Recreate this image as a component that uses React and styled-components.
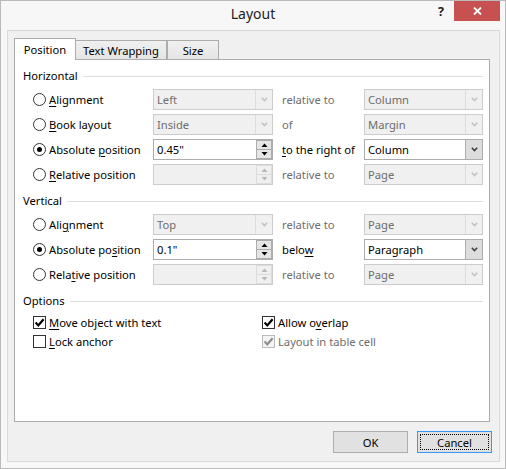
import React from 'react';
import styled, { createGlobalStyle } from 'styled-components';

const GlobalStyle = createGlobalStyle`
  html, body {
    margin: 0;
    padding: 0;
    background: #ffffff;
  }
  body {
    font-family: "Segoe UI", "Noto Sans", sans-serif;
    font-size: 11.2px;
    color: #000;
  }
  * {
    box-sizing: border-box;
  }
`;

const Window = styled.div`
  width: 506px;
  height: 469px;
  border: 1px solid #bababa;
  background: #f7f7f7;
  display: flex;
  flex-direction: column;
`;

const TitleBar = styled.div`
  height: 29px;
  flex: none;
  display: grid;
  grid-template-columns: 1fr auto 1fr;
  align-items: start;
`;

const Title = styled.div`
  grid-column: 2;
  font-size: 14px;
  line-height: 26px;
  color: #1e1e1e;
`;

const Controls = styled.div`
  grid-column: 3;
  justify-self: end;
  display: flex;
  margin-right: 5px;
`;

const HelpButton = styled.div`
  width: 26px;
  height: 20px;
  text-align: center;
  font-size: 12.5px;
  font-weight: bold;
  line-height: 22px;
  color: #222;
`;

const CloseButton = styled.div`
  width: 46px;
  height: 20px;
  background: #c75050;
  display: flex;
  align-items: center;
  justify-content: center;
`;

const Client = styled.div`
  flex: 1;
  margin: 0 5px 6px 6px;
  border: 1px solid #d9d9d9;
  background: #f0f0f0;
  padding: 7px 9px 8px 6px;
  display: flex;
  flex-direction: column;
`;

const TabRow = styled.div`
  display: flex;
  align-items: flex-end;
  height: 21px;
  flex: none;
`;

const Tab = styled.div`
  width: ${(p) => p.$w}px;
  margin-left: ${(p) => p.$ml || 0}px;
  height: ${(p) => (p.$active ? 22 : 19)}px;
  margin-bottom: ${(p) => (p.$active ? -1 : 0)}px;
  position: relative;
  z-index: ${(p) => (p.$active ? 1 : 0)};
  border: 1px solid #acacac;
  border-bottom: none;
  background: ${(p) => (p.$active ? '#ffffff' : 'linear-gradient(#f0f0f0, #e5e5e5)')};
  display: flex;
  align-items: center;
  justify-content: center;
  padding-bottom: ${(p) => (p.$active ? 1 : 0)}px;
`;

const Panel = styled.div`
  height: 363px;
  flex: none;
  background: #ffffff;
  border: 1px solid #acacac;
  padding: 8px 6px 0 8px;
`;

const Section = styled.div`
  margin-top: ${(p) => (p.$first ? 0 : 8)}px;
`;

const SectionHeader = styled.div`
  height: 16px;
  line-height: 16px;
  display: flex;
  align-items: center;
  gap: 5px;
  margin-bottom: 5px;

  &::after {
    content: '';
    flex: 1;
    height: 1px;
    background: #dcdcdc;
  }
`;

const Rows = styled.div`
  display: flex;
  flex-direction: column;
  gap: ${(p) => p.$gap}px;
  margin-left: 10px;
`;

const Row = styled.div`
  display: grid;
  grid-template-columns: 120px 120px 91px 1fr;
  align-items: center;
  height: 21px;
`;

const Choice = styled.div`
  display: flex;
  align-items: center;
  gap: 3px;
  white-space: nowrap;
  color: ${(p) => (p.$disabled ? '#6d6d6d' : '#000')};
`;

const RadioCircle = styled.span`
  width: 13px;
  height: 13px;
  flex: none;
  border-radius: 50%;
  border: 1px solid #333333;
  background: #ffffff;
  display: flex;
  align-items: center;
  justify-content: center;

  &::after {
    content: '';
    width: 5px;
    height: 5px;
    border-radius: 50%;
    background: ${(p) => (p.$checked ? '#000' : 'transparent')};
  }
`;

const CheckBox = styled.span`
  width: 13px;
  height: 13px;
  flex: none;
  border: 1px solid ${(p) => (p.$disabled ? '#bcbcbc' : '#333333')};
  background: ${(p) => (p.$disabled ? '#f4f4f4' : '#ffffff')};
  display: flex;
  align-items: center;
  justify-content: center;
`;

const Key = styled.span`
  text-decoration: underline;
  text-underline-offset: 2px;
`;

const RelLabel = styled.div`
  padding-left: 9px;
  white-space: nowrap;
  color: ${(p) => (p.$disabled ? '#6d6d6d' : '#000')};
`;

const Field = styled.div`
  height: 21px;
  display: flex;
  border: 1px solid ${(p) => (p.$disabled ? '#cccccc' : '#acacac')};
  background: ${(p) => (p.$disabled ? '#f0f0f0' : '#ffffff')};
  color: ${(p) => (p.$disabled ? '#6d6d6d' : '#000')};
`;

const FieldText = styled.div`
  flex: 1;
  padding-left: 3px;
  display: flex;
  align-items: center;
  white-space: nowrap;
`;

const DropButton = styled.div`
  width: 17px;
  flex: none;
  display: flex;
  align-items: center;
  justify-content: center;
  border-left: 1px solid ${(p) => (p.$disabled ? '#dcdcdc' : '#acacac')};
  background: ${(p) => (p.$disabled ? '#f0f0f0' : '#dddddd')};
`;

const Spin = styled.div`
  width: 16px;
  flex: none;
  display: flex;
  flex-direction: column;
`;

const SpinHalf = styled.div`
  flex: 1;
  display: flex;
  align-items: center;
  justify-content: center;
  border: 1px solid ${(p) => (p.$disabled ? '#dcdcdc' : '#acacac')};
  border-top: ${(p) => (p.$bottom ? 'none' : undefined)};
  background: ${(p) => (p.$disabled ? '#f0f0f0' : '#e6e6e6')};
`;

const OptionGrid = styled.div`
  display: grid;
  grid-template-columns: 229px 1fr;
  grid-auto-rows: 16px;
  row-gap: 3px;
  margin-left: 10px;
`;

const ButtonRow = styled.div`
  display: flex;
  justify-content: flex-end;
  gap: 9px;
  margin-top: 9px;
  margin-right: -2px;
`;

const Button = styled.div`
  width: 75px;
  height: 22px;
  display: flex;
  align-items: center;
  justify-content: center;
  background: #e1e1e1;
  border: 1px solid ${(p) => (p.$focused ? '#3399ff' : '#adadad')};
  outline: ${(p) => (p.$focused ? '1px dotted #000' : 'none')};
  outline-offset: -4px;
`;

const Chevron = ({ disabled }) => (
  <svg width="7" height="5" viewBox="0 0 7 5">
    <polyline
      points="0.8,0.8 3.5,3.6 6.2,0.8"
      fill="none"
      stroke={disabled ? '#c2c2c2' : '#404040'}
      strokeWidth="1.6"
    />
  </svg>
);

const Triangle = ({ up, disabled }) => (
  <svg width="7" height="4" viewBox="0 0 7 4">
    <polygon
      points={up ? '0.5,4 3.5,0.5 6.5,4' : '0.5,0 3.5,3.5 6.5,0'}
      fill={disabled ? '#b8b8b8' : '#000'}
    />
  </svg>
);

const Tick = ({ disabled }) => (
  <svg width="11" height="11" viewBox="0 0 11 11">
    <polyline
      points="1.6,5.6 4.3,8.4 9.6,2.2"
      fill="none"
      stroke={disabled ? '#8e8e8e' : '#000'}
      strokeWidth="2.2"
    />
  </svg>
);

const Combo = ({ value, disabled }) => (
  <Field $disabled={disabled}>
    <FieldText>{value}</FieldText>
    <DropButton $disabled={disabled}>
      <Chevron disabled={disabled} />
    </DropButton>
  </Field>
);

const SpinField = ({ value, disabled }) => (
  <Field $disabled={disabled}>
    <FieldText>{value}</FieldText>
    <Spin>
      <SpinHalf $disabled={disabled}>
        <Triangle up disabled={disabled} />
      </SpinHalf>
      <SpinHalf $disabled={disabled} $bottom>
        <Triangle disabled={disabled} />
      </SpinHalf>
    </Spin>
  </Field>
);

const Radio = ({ checked, children }) => (
  <Choice>
    <RadioCircle $checked={checked} />
    <span>{children}</span>
  </Choice>
);

const Check = ({ checked, disabled, children }) => (
  <Choice $disabled={disabled}>
    <CheckBox $disabled={disabled}>{checked && <Tick disabled={disabled} />}</CheckBox>
    <span>{children}</span>
  </Choice>
);

const PositionRow = ({ label, checked, field, relLabel, relActive, relValue }) => (
  <Row>
    <Radio checked={checked}>{label}</Radio>
    {field}
    <RelLabel $disabled={!relActive}>{relLabel}</RelLabel>
    <Combo value={relValue} disabled={!relActive} />
  </Row>
);

export default function App() {
  return (
    <>
      <GlobalStyle />
      <Window>
        <TitleBar>
          <Title>Layout</Title>
          <Controls>
            <HelpButton>?</HelpButton>
            <CloseButton>
              <svg width="9" height="8" viewBox="0 0 9 8">
                <path d="M1 0.5 L8 7.5 M8 0.5 L1 7.5" stroke="#fff" strokeWidth="1.8" />
              </svg>
            </CloseButton>
          </Controls>
        </TitleBar>

        <Client>
          <TabRow>
            <Tab $w={62} $active>Position</Tab>
            <Tab $w={92} $ml={-1}>Text Wrapping</Tab>
            <Tab $w={52}>Size</Tab>
          </TabRow>

          <Panel>
            <Section $first>
              <SectionHeader>Horizontal</SectionHeader>
              <Rows $gap={4}>
                <PositionRow
                  label={<><Key>A</Key>lignment</>}
                  field={<Combo value="Left" disabled />}
                  relLabel="relative to"
                  relValue="Column"
                />
                <PositionRow
                  label={<><Key>B</Key>ook layout</>}
                  field={<Combo value="Inside" disabled />}
                  relLabel="of"
                  relValue="Margin"
                />
                <PositionRow
                  checked
                  label={<>Absolute <Key>p</Key>osition</>}
                  field={<SpinField value={'0.45"'} />}
                  relLabel={<><Key>t</Key>o the right of</>}
                  relActive
                  relValue="Column"
                />
                <PositionRow
                  label={<><Key>R</Key>elative position</>}
                  field={<SpinField value="" disabled />}
                  relLabel="relative to"
                  relValue="Page"
                />
              </Rows>
            </Section>

            <Section>
              <SectionHeader>Vertical</SectionHeader>
              <Rows $gap={4}>
                <PositionRow
                  label={<>Ali<Key>g</Key>nment</>}
                  field={<Combo value="Top" disabled />}
                  relLabel="relative to"
                  relValue="Page"
                />
                <PositionRow
                  checked
                  label={<>Absolute po<Key>s</Key>ition</>}
                  field={<SpinField value={'0.1"'} />}
                  relLabel={<>belo<Key>w</Key></>}
                  relActive
                  relValue="Paragraph"
                />
                <PositionRow
                  label={<>Rela<Key>t</Key>ive position</>}
                  field={<SpinField value="" disabled />}
                  relLabel="relative to"
                  relValue="Page"
                />
              </Rows>
            </Section>

            <Section>
              <SectionHeader>Options</SectionHeader>
              <OptionGrid>
                <Check checked><Key>M</Key>ove object with text</Check>
                <Check checked>Allow o<Key>v</Key>erlap</Check>
                <Check><Key>L</Key>ock anchor</Check>
                <Check checked disabled>Layout in table cell</Check>
              </OptionGrid>
            </Section>
          </Panel>

          <ButtonRow>
            <Button>OK</Button>
            <Button $focused>Cancel</Button>
          </ButtonRow>
        </Client>
      </Window>
    </>
  );
}
